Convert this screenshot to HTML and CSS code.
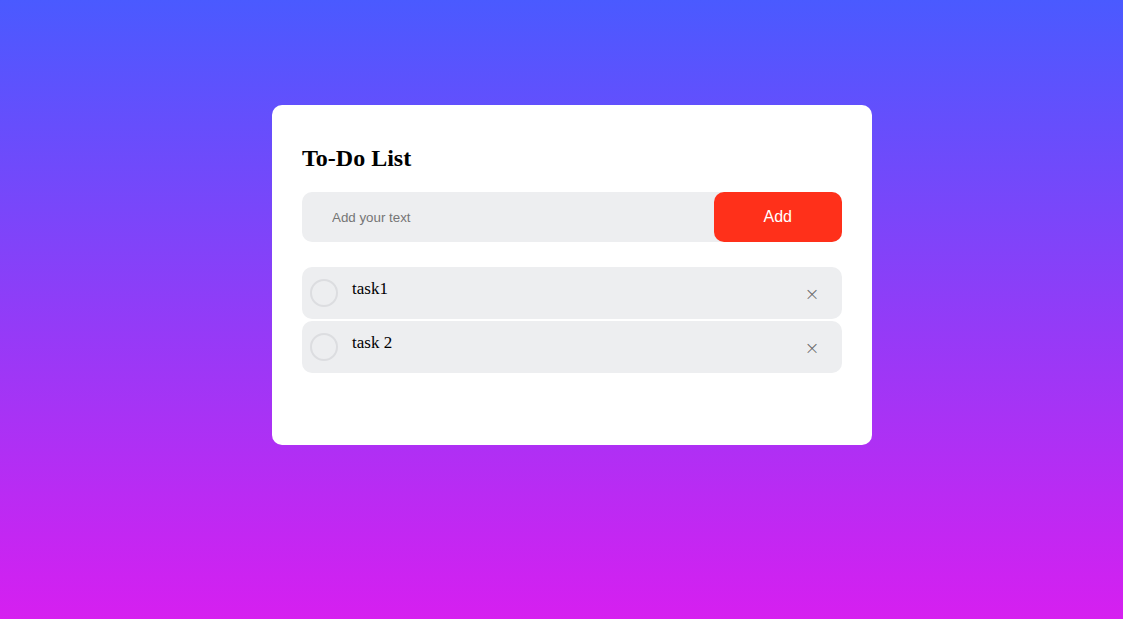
FILE: index.html
```html
<!DOCTYPE html>
<html>
<head>
<meta charset="utf-8">
<link rel="stylesheet" href="styles.css">
</head>
<body>
<div class="container">
  <div class="todo-app">
    <h2 class="title">To-Do List</h2>
    <div class="row">
      <input class="text-input" type="text" placeholder="Add your text">
      <button class="add-btn">Add</button>
    </div>
    <ul class="list">
      <li class="item"><span class="check"></span><span class="label">task1</span><span class="remove">×</span></li>
      <li class="item"><span class="check"></span><span class="label">task 2</span><span class="remove">×</span></li>
    </ul>
  </div>
</div>
</body>
</html>
```

FILE: styles.css
```css
* { box-sizing: border-box; margin: 0; padding: 0; }
html, body { height: 100%; }
body {
  font-family: "Liberation Serif", "Times New Roman", serif;
  background: linear-gradient(to bottom, #4a5aff, #d61ff0);
  overflow: hidden;
}
.container {
  width: 100%;
  padding: 105px 0 0 21px;
}
.todo-app {
  width: 600px;
  margin: 0 auto;
  background: #fff;
  padding: 40px 30px 72px;
  border-radius: 10px;
}
.title {
  font-size: 24px;
  font-weight: bold;
  color: #000;
  line-height: 27px;
  margin-bottom: 20px;
}
.row {
  display: flex;
  align-items: center;
  justify-content: space-between;
  background: #edeef0;
  border-radius: 10px;
  padding-left: 20px;
  margin-bottom: 25px;
}
.text-input {
  flex: 1;
  border: none;
  outline: none;
  background: transparent;
  padding: 10px;
  font-family: "Liberation Sans", Arial, sans-serif;
  font-size: 13.33px;
  color: #333;
}
.text-input::placeholder { color: #757575; }
.add-btn {
  border: none;
  outline: none;
  padding: 16px 50px;
  background: #ff301a;
  color: #fff;
  font-family: "Liberation Sans", Arial, sans-serif;
  font-size: 16px;
  line-height: 18px;
  border-radius: 10px;
  cursor: pointer;
}
.list { list-style: none; display: flex; flex-direction: column; gap: 2px; }
.item {
  display: flex;
  align-items: center;
  background: #edeef0;
  border-radius: 10px;
  height: 52px;
  padding: 0 8px;
  font-size: 17px;
  position: relative;
}
.check {
  width: 28px;
  height: 28px;
  border-radius: 50%;
  border: 2px solid #dcdde0;
  flex: none;
}
.label {
  flex: 1;
  margin-left: 14px;
  margin-top: -8px;
  color: #000;
}
.remove {
  width: 40px;
  text-align: center;
  font-family: "DejaVu Sans", sans-serif;
  font-weight: 300;
  font-size: 18px;
  color: #666;
  margin-right: 2px;
  margin-top: 1px;
}
```
